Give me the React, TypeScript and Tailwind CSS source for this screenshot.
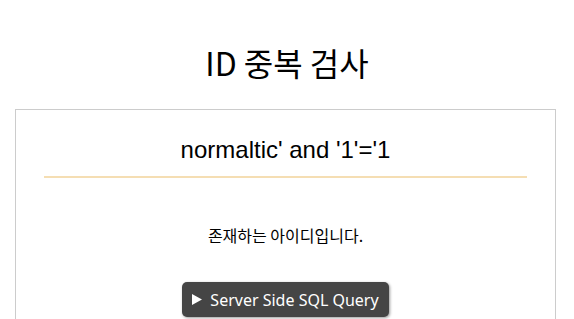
export default function App() {
  return (
    <div className="min-h-screen bg-white text-black font-['Noto_Sans_CJK_KR','Noto_Sans',sans-serif]">
      <h1 className="pt-[42px] pb-[26px] text-center text-[32px] leading-[41px]">ID 중복 검사</h1>

      <div className="ml-[15px] w-[541px] border border-[#cccccc] px-[28px] pt-[24px] pb-10">
        {/* query */}
        <div className="border-b-2 border-[#f5deb3] pb-[10px] text-center font-['Liberation_Sans',sans-serif] text-[24px] leading-[32px]">
          normaltic' and '1'='1
        </div>

        <p className="mt-[46px] text-center text-[16px] leading-[22px]">존재하는 아이디입니다.</p>

        <div className="mt-[36px] flex justify-center">
          <button className="flex h-[35px] items-center gap-[8px] rounded-[5px] bg-[#454545] px-[10px] text-[16px] text-white shadow-[1px_1px_3px_rgba(0,0,0,0.4)] font-['Noto_Sans',sans-serif]">
            <svg width="10" height="11" viewBox="0 0 10 11" className="fill-white">
              <path d="M0 0 L10 5.5 L0 11 Z" />
            </svg>
            Server Side SQL Query
          </button>
        </div>
      </div>
    </div>
  );
}
